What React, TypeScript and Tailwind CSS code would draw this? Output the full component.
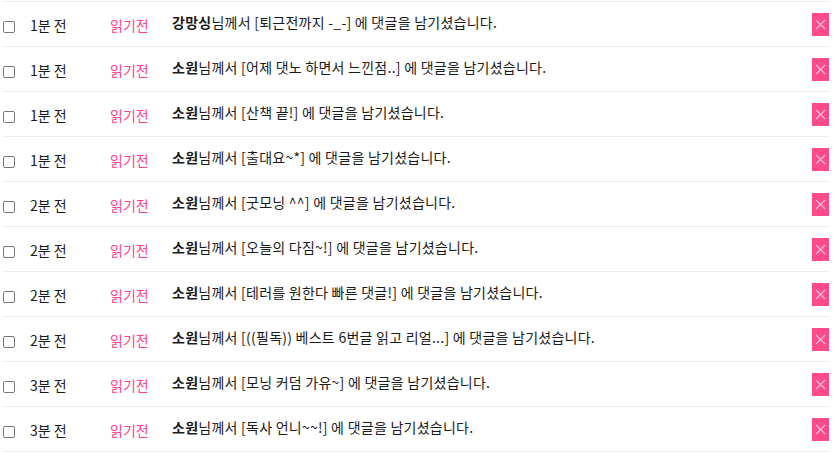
import React from 'react';

const rows = [
  { time: '1분 전', name: '강망싱', title: '퇴근전까지 -_-' },
  { time: '1분 전', name: '소원', title: '어제 댓노 하면서 느낀점..' },
  { time: '1분 전', name: '소원', title: '산책 끝!' },
  { time: '1분 전', name: '소원', title: '출대요~*' },
  { time: '2분 전', name: '소원', title: '굿모닝 ^^' },
  { time: '2분 전', name: '소원', title: '오늘의 다짐~!' },
  { time: '2분 전', name: '소원', title: '테러를 원한다 빠른 댓글!' },
  { time: '2분 전', name: '소원', title: '((필독)) 베스트 6번글 읽고 리얼...' },
  { time: '3분 전', name: '소원', title: '모닝 커덤 가유~' },
  { time: '3분 전', name: '소원', title: '독사 언니~~!' },
];

const App = () => {
  return (
    <div
      className="w-[835px] h-[461px] bg-white pt-px pl-[2px] pr-[5px] text-[14px] text-[#1a1a1a]"
      style={{ fontFamily: '"Noto Sans CJK KR", "Noto Sans", sans-serif' }}
    >
      <div className="border-b border-[#eeeeee]">
        {rows.map((row, i) => (
          <div key={i} className="flex items-center h-[45px] border-t border-[#eeeeee]">
            <input
              type="checkbox"
              className="w-[12px] h-[12px] ml-px mt-[6px] appearance-none border border-[#777] rounded-[2px] bg-white"
            />
            <span className="ml-[15px] w-[80px] mt-[3px]">{row.time}</span>
            <span className="w-[62px] mt-[3px] text-[#ff3f87]">읽기전</span>
            <span className="flex-1 -mt-[4px] tracking-[0.25px]">
              <b className="font-bold">{row.name}</b>님께서 [{row.title}] 에 댓글을 남기셨습니다.
            </span>
            <button className="w-[17px] h-[23px] bg-[#ff4b8b] flex items-center justify-center mr-px">
              <svg width="11" height="11" viewBox="0 0 11 11" stroke="#ffc2d8" strokeWidth="1.1" fill="none">
                <path d="M1 1 L10 10 M10 1 L1 10" />
              </svg>
            </button>
          </div>
        ))}
      </div>
    </div>
  );
};

export default App;
